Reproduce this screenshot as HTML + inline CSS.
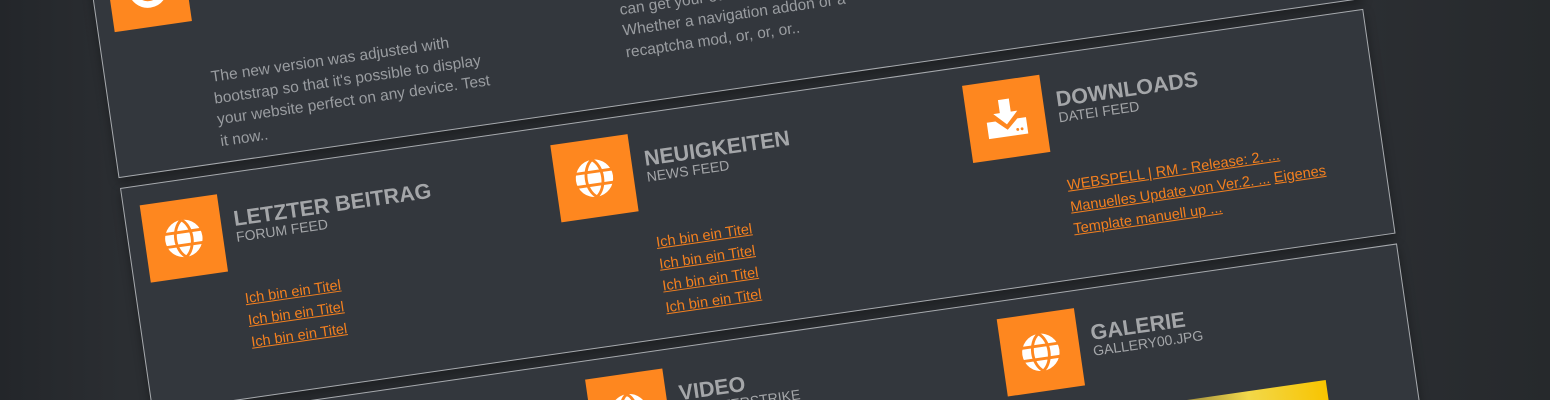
<!DOCTYPE html>
<html><head><meta charset="utf-8"><style>
html,body{margin:0;padding:0;width:1550px;height:400px;overflow:hidden;background:#2a2d31;font-family:"Liberation Sans",sans-serif}
.root{position:relative;width:1550px;height:400px;overflow:hidden}
.bgl{position:absolute;left:0;top:0;width:1550px;height:400px;background:linear-gradient(90deg,#23262a 0,#2b2e32 8%,#2b2e32 88%,#26292c 100%)}
.wrap{position:absolute;left:120px;top:188px;transform-origin:0 0;transform:rotate(-8.2deg)}
.p{position:absolute;left:0;width:1256px;background:#33373d;border:1px solid #a7aaae;box-sizing:border-box;box-shadow:0 4px 10px rgba(0,0,0,.35)}
.ic{position:absolute;width:78px;height:78px;background:#fe871f}
.ic svg{position:absolute;left:17px;top:17px}
.t{position:absolute;color:#a4a6a9;font-weight:bold;font-size:21.5px;line-height:22px;white-space:nowrap}
.s{position:absolute;color:#a4a6a9;font-size:14px;line-height:14px;white-space:nowrap}
.l{position:absolute;font-size:14.5px;line-height:22px;color:#f4801f;white-space:nowrap}
.l a{color:#f4801f;text-decoration:underline}
.tx{position:absolute;color:#9a9da1;font-size:15.5px;line-height:21.5px;white-space:nowrap}
</style></head><body><div class="root">
<div class="bgl"></div>
<div class="wrap">
 <div class="p" style="top:-252px;height:242px"></div>
 <div class="p" style="top:0;height:227px"></div>
 <div class="p" style="top:237px;height:170px"></div>

 <div class="ic" style="left:17px;top:-233px"><svg width="44" height="44" viewBox="0 0 40 40"><circle cx="20" cy="20" r="15" fill="none" stroke="#fff" stroke-width="6"/></svg></div>
 <div class="t" style="left:108px;top:-214px">LOOKS GOOD</div>
 <div class="s" style="left:108px;top:-192px">LOOKS GOOD</div>
 <div class="tx" style="left:106px;top:-107px">The new version was adjusted with<br>bootstrap so that it's possible to display<br>your website perfect on any device. Test<br>it now..</div>
 <div class="tx" style="left:520px;top:-137px">With the Addon system you<br>can get your own individual system.<br>Whether a navigation addon or a<br>recaptcha mod, or, or, or..</div>

 <div class="ic" style="left:17px;top:20px"><svg width="44" height="44" viewBox="0 0 40 40"><circle cx="20" cy="20" r="17" fill="#fff"/><path d="M3 14H37M3 26H37M20 3C10 10 10 30 20 37M20 3C30 10 30 30 20 37" stroke="#fe871f" stroke-width="2.6" fill="none"/></svg></div>
 <div class="t" style="left:108px;top:36px">LETZTER BEITRAG</div>
 <div class="s" style="left:108px;top:58px">FORUM FEED</div>
 <div class="l" style="left:108px;top:117px"><a>Ich bin ein Titel</a><br><a>Ich bin ein Titel</a><br><a>Ich bin ein Titel</a></div>

 <div class="ic" style="left:432px;top:19px"><svg width="44" height="44" viewBox="0 0 40 40"><circle cx="20" cy="20" r="17" fill="#fff"/><path d="M3 14H37M3 26H37M20 3C10 10 10 30 20 37M20 3C30 10 30 30 20 37" stroke="#fe871f" stroke-width="2.6" fill="none"/></svg></div>
 <div class="t" style="left:523px;top:35px">NEUIGKEITEN</div>
 <div class="s" style="left:523px;top:57px">NEWS FEED</div>
 <div class="l" style="left:523px;top:120px"><a>Ich bin ein Titel</a><br><a>Ich bin ein Titel</a><br><a>Ich bin ein Titel</a><br><a>Ich bin ein Titel</a></div>

 <div class="ic" style="left:848px;top:19px"><svg width="44" height="44" viewBox="0 0 40 40"><path d="M15 2H25V14H31L20 25L9 14H15Z" fill="#fff"/><path d="M2 21H10L20 30L30 21H38V36H2Z" fill="#fff"/><circle cx="29" cy="31" r="1.3" fill="#fe871f"/><circle cx="33" cy="31" r="1.3" fill="#fe871f"/></svg></div>
 <div class="t" style="left:939px;top:35px">DOWNLOADS</div>
 <div class="s" style="left:939px;top:57px">DATEI FEED</div>
 <div class="l" style="left:938px;top:122px;width:262px;white-space:normal"><a>WEBSPELL | RM - Release: 2. ...</a> <a>Manuelles Update von Ver.2. ...</a> <a>Eigenes Template manuell up ...</a></div>

 <div class="ic" style="left:433px;top:256px"><svg width="44" height="44" viewBox="0 0 40 40"><circle cx="20" cy="20" r="17" fill="#fff"/><path d="M3 14H37M3 26H37M20 3C10 10 10 30 20 37M20 3C30 10 30 30 20 37" stroke="#fe871f" stroke-width="2.6" fill="none"/></svg></div>
 <div class="t" style="left:524px;top:272px">VIDEO</div>
 <div class="s" style="left:524px;top:294px">COUNTERSTRIKE</div>

 <div class="ic" style="left:849px;top:255px"><svg width="44" height="44" viewBox="0 0 40 40"><circle cx="20" cy="20" r="17" fill="#fff"/><path d="M3 14H37M3 26H37M20 3C10 10 10 30 20 37M20 3C30 10 30 30 20 37" stroke="#fe871f" stroke-width="2.6" fill="none"/></svg></div>
 <div class="t" style="left:940px;top:271px">GALERIE</div>
 <div class="s" style="left:940px;top:293px">GALLERY00.JPG</div>
 <div style="position:absolute;left:940px;top:362px;width:226px;height:40px;background:linear-gradient(90deg,#3a3b3c 0%,#8b7a3a 30%,#f2d84a 65%,#f8c400 100%)"></div>
</div>
</div></body></html>
